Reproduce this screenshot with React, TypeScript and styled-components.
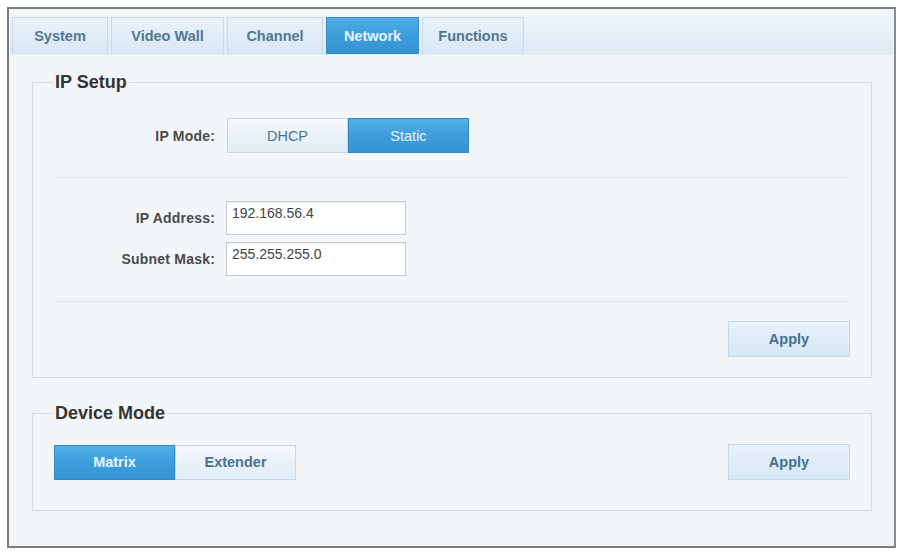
import React, { useState } from "react";
import styled, { createGlobalStyle, css } from "styled-components";

const Global = createGlobalStyle`
  html, body { margin: 0; padding: 0; background: #ffffff; }
  body { font-family: "Liberation Sans", Arial, sans-serif; }
  * { box-sizing: border-box; }
`;

const Frame = styled.div`
  margin: 7px 0 0 7px;
  width: 889px;
  height: 541px;
  border: 2px solid #7c7c7c;
  border-right-color: #8a8a8a;
  background: #f3f6f9;
  padding: 3px 1px 0 1px;
  display: flex;
  flex-direction: column;
`;

const TabStrip = styled.div`
  height: 43px;
  padding: 5px 0 0 2px;
  display: flex;
  align-items: stretch;
  gap: 3px;
  background: linear-gradient(#eef5fb, #dfeaf5);
  border-bottom: 1px solid #e3ebf2;
`;

const Tab = styled.div<{ $w: number; $active?: boolean }>`
  width: ${(p) => p.$w}px;
  display: flex;
  align-items: center;
  justify-content: center;
  font-size: 14.5px;
  font-weight: bold;
  color: #4f7893;
  background: linear-gradient(#e9f2fa, #d9e7f3);
  border: 1px solid #cad9e6;
  border-bottom: none;
  ${(p) =>
    p.$active &&
    css`
      color: #e6f3fc;
      background: linear-gradient(#4eaee6, #3a9bdb 55%, #3592d2);
      border-color: #3a8cc6;
    `}
`;

const Content = styled.div`
  flex: 1;
  padding: 17px 21px 0 22px;
  display: flex;
  flex-direction: column;
  gap: 25px;
`;

const Group = styled.fieldset<{ $pt: number; $pb: number }>`
  margin: 0;
  border: 1px solid #d3d9df;
  padding: ${(p) => p.$pt}px 21px ${(p) => p.$pb}px 21px;
  min-width: 0;
  display: flex;
  flex-direction: column;
`;

const Legend = styled.legend`
  margin-left: 0;
  padding: 0 2px 0 1px;
  font-size: 18px;
  line-height: 20px;
  font-weight: bold;
  color: #333333;
`;

const FormRow = styled.div`
  display: flex;
  align-items: center;
  gap: 12px;
`;

const Label = styled.label`
  width: 161px;
  text-align: right;
  font-size: 14px;
  letter-spacing: 0.2px;
  font-weight: bold;
  color: #4a4a4a;
`;

const Segmented = styled.div`
  display: flex;
`;

const SegButton = styled.button<{ $active?: boolean; $bold?: boolean }>`
  width: 121px;
  height: 35px;
  margin: 0;
  padding: 0;
  font-family: "Liberation Sans", Arial, sans-serif;
  font-size: 14.5px;
  font-weight: ${(p) => (p.$bold ? "bold" : "normal")};
  color: #4a7291;
  background: linear-gradient(#f3f8fc, #e1ecf5);
  border: 1px solid #c9d7e3;
  cursor: pointer;
  ${(p) =>
    p.$active &&
    css`
      color: #eaf5fd;
      background: linear-gradient(#52b0e8, #3d9ddd 50%, #3794d4);
      border-color: #3289c4;
    `}
`;

const Separator = styled.div<{ $mt: number; $mb: number }>`
  height: 1px;
  background: #dfe5ea;
  margin: ${(p) => p.$mt}px 0 ${(p) => p.$mb}px 0;
`;

const Fields = styled.div`
  display: flex;
  flex-direction: column;
  gap: 7px;
`;

const Input = styled.input`
  width: 180px;
  height: 34px;
  margin: 0 0 0 -1px;
  padding: 0 5px 10px 5px;
  font-family: "Liberation Sans", Arial, sans-serif;
  font-size: 14px;
  color: #444;
  background: #ffffff;
  border: 1px solid #c3c9cf;
  box-shadow: inset 0 1px 1px rgba(0, 0, 0, 0.06);
  outline: none;
`;

const ActionRow = styled.div<{ $between?: boolean }>`
  display: flex;
  align-items: center;
  justify-content: ${(p) => (p.$between ? "space-between" : "flex-end")};
`;

const ApplyButton = styled.button`
  width: 122px;
  height: 36px;
  margin: 0;
  padding: 0;
  font-family: "Liberation Sans", Arial, sans-serif;
  font-size: 14.5px;
  font-weight: bold;
  color: #42718f;
  background: linear-gradient(#e8f2fa, #d6e7f4);
  border: 1px solid #c6d8e6;
  cursor: pointer;
`;

const tabs = [
  { name: "System", w: 96 },
  { name: "Video Wall", w: 113 },
  { name: "Channel", w: 96 },
  { name: "Network", w: 93 },
  { name: "Functions", w: 102 },
];

export default function App() {
  const [ipMode, setIpMode] = useState("Static");
  const [devMode, setDevMode] = useState("Matrix");
  return (
    <>
      <Global />
      <Frame>
        <TabStrip>
          {tabs.map((t) => (
            <Tab key={t.name} $w={t.w} $active={t.name === "Network"}>
              {t.name}
            </Tab>
          ))}
        </TabStrip>
        <Content>
          <Group $pt={26} $pb={20}>
            <Legend>IP Setup</Legend>
            <FormRow>
              <Label>IP Mode:</Label>
              <Segmented>
                {["DHCP", "Static"].map((m) => (
                  <SegButton key={m} $active={ipMode === m} onClick={() => setIpMode(m)}>
                    {m}
                  </SegButton>
                ))}
              </Segmented>
            </FormRow>
            <Separator $mt={24} $mb={23} />
            <Fields>
              <FormRow>
                <Label>IP Address:</Label>
                <Input defaultValue="192.168.56.4" />
              </FormRow>
              <FormRow>
                <Label>Subnet Mask:</Label>
                <Input defaultValue="255.255.255.0" />
              </FormRow>
            </Fields>
            <Separator $mt={25} $mb={19} />
            <ActionRow>
              <ApplyButton>Apply</ApplyButton>
            </ActionRow>
          </Group>
          <Group $pt={21} $pb={30}>
            <Legend>Device Mode</Legend>
            <ActionRow $between>
              <Segmented>
                {["Matrix", "Extender"].map((m) => (
                  <SegButton key={m} $bold $active={devMode === m} onClick={() => setDevMode(m)}>
                    {m}
                  </SegButton>
                ))}
              </Segmented>
              <ApplyButton>Apply</ApplyButton>
            </ActionRow>
          </Group>
        </Content>
      </Frame>
    </>
  );
}
